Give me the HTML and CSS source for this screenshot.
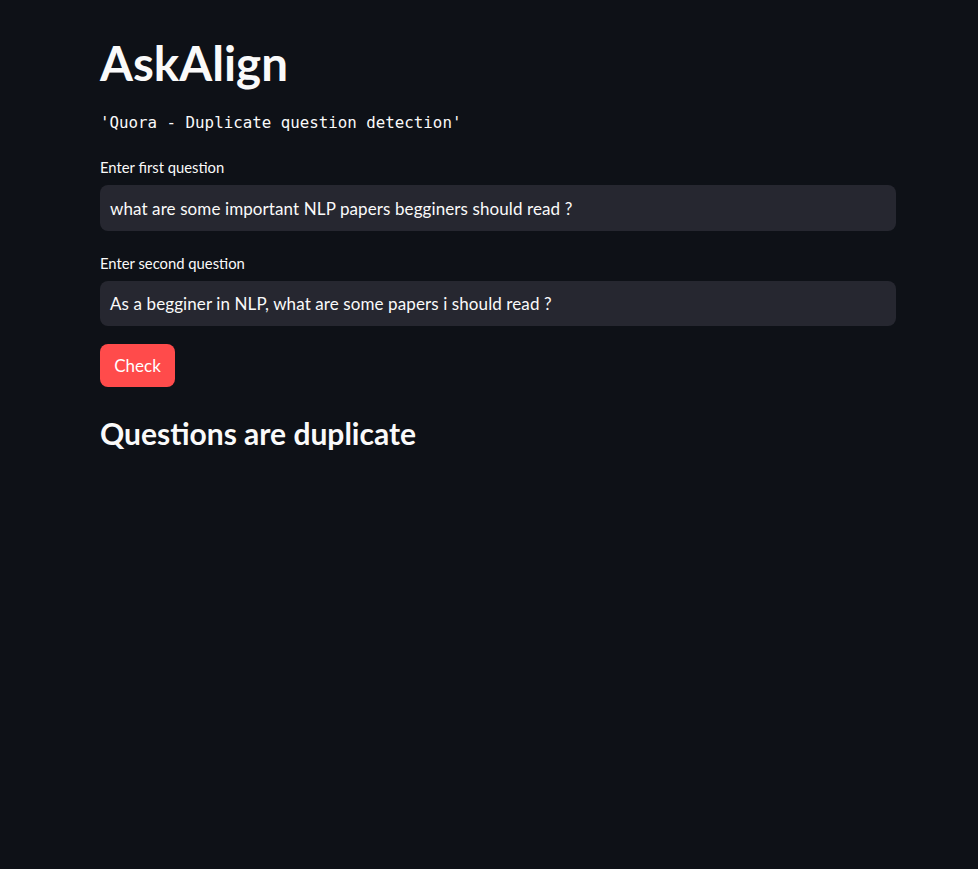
FILE: index.html
```html
<!DOCTYPE html>
<html>
<head>
<meta charset="utf-8">
<link rel="stylesheet" href="styles.css">
</head>
<body>
<main class="main">
  <h1 class="title">AskAlign</h1>
  <p class="code">'Quora - Duplicate question detection'</p>
  <div class="field">
    <label class="label">Enter first question</label>
    <div class="input">what are some important NLP papers begginers should read ?</div>
  </div>
  <div class="field">
    <label class="label">Enter second question</label>
    <div class="input">As a begginer in NLP, what are some papers i should read ?</div>
  </div>
  <button class="btn">Check</button>
  <h3 class="result">Questions are duplicate</h3>
</main>
</body>
</html>
```
FILE: styles.css
```css
html, body {
  margin: 0;
  padding: 0;
  background: #0e1117;
  color: #fafafa;
  font-family: Lato, "Noto Sans", sans-serif;
  height: 100%;
}
.main {
  width: 796px;
  margin-left: 100px;
  padding-top: 35px;
  display: flex;
  flex-direction: column;
}
.title {
  margin: 0;
  font-size: 47.5px;
  font-weight: 700;
  line-height: 56px;
}
.code {
  margin: 21px 0 0;
  font-family: "DejaVu Sans Mono", monospace;
  font-size: 15.8px;
  line-height: 22px;
  color: #fafafa;
}
.field {
  display: flex;
  flex-direction: column;
  margin-top: 23px;
}
.field + .field {
  margin-top: 22px;
}
.label {
  font-size: 14.8px;
  line-height: 20px;
  margin-bottom: 8px;
}
.input {
  background: #262730;
  border-radius: 8px;
  height: 46px;
  display: flex;
  align-items: center;
  padding: 0 10px;
  font-size: 17px;
  letter-spacing: 0.1px;
}
.field + .field .input {
  height: 45px;
}
.btn {
  align-self: flex-start;
  margin-top: 18px;
  background: #ff4b4b;
  color: #fff;
  border: none;
  border-radius: 8px;
  width: 75px;
  height: 43px;
  font-family: Lato, sans-serif;
  font-size: 17px;
  padding: 0;
}
.result {
  margin: 28px 0 0;
  font-size: 30px;
  font-weight: 700;
  line-height: 36px;
}
```
